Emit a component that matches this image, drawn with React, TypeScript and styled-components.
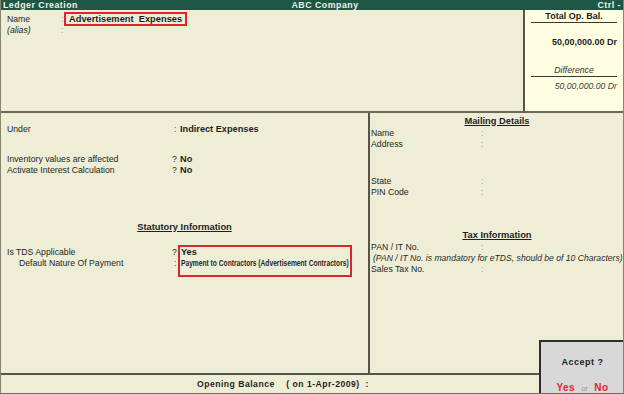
import React from "react";
import styled, { createGlobalStyle } from "styled-components";

const GlobalStyle = createGlobalStyle`
  body {
    margin: 0;
    font-family: "Liberation Sans", Arial, sans-serif;
    background: #eeeed7;
  }
`;

const Screen = styled.div`
  position: relative;
  width: 624px;
  height: 394px;
  box-sizing: border-box;
  display: flex;
  flex-direction: column;
  background: #eeeed7;
  border-left: 1px solid #86866f;
  border-right: 1px solid #86866f;
  border-bottom: 1px solid #6e6e5c;
  overflow: hidden;
  color: #1e1e1e;
  font-size: 8.7px;
`;

const TitleBar = styled.div`
  display: grid;
  grid-template-columns: 1fr auto 1fr;
  height: 10px;
  line-height: 10px;
  padding: 0 2px;
  background: #1f5746;
  color: #eef2e2;
  font-weight: bold;
  font-size: 8.8px;
  letter-spacing: 0.5px;
`;

const TitleCell = styled.span<{ $align: "left" | "center" | "right" }>`
  text-align: ${(p) => p.$align};
  margin-left: ${(p) => (p.$align === "center" ? "26px" : "0")};
`;

const TopArea = styled.div`
  display: flex;
  height: 101px;
  border-bottom: 2px solid #6a6a58;
`;

const NameBlock = styled.div`
  flex: 1;
  padding: 2px 0 0 6px;
`;

const NameRow = styled.div`
  display: grid;
  grid-template-columns: 54px 3px auto;
  align-items: center;
  justify-content: start;
  height: 14px;
`;

const AliasRow = styled.div`
  display: grid;
  grid-template-columns: 54px 3px;
  line-height: 10px;
  margin-top: -1px;
  font-style: italic;
`;

const Colon = styled.span<{ $faint?: boolean; $indent?: number }>`
  color: ${(p) => (p.$faint ? "#9a9a88" : "#555")};
  font-style: normal;
  padding-left: ${(p) => p.$indent ?? 0}px;
`;

const HighlightBox = styled.div<{ $pad?: string }>`
  border: 2px solid #e0232c;
  padding: ${(p) => p.$pad || "0 3px"};
`;

const NameValue = styled.span`
  font-weight: bold;
  font-size: 9.3px;
  line-height: 10px;
  white-space: pre;
  display: block;
`;

const TotalPanel = styled.div`
  width: 98px;
  background: #fefee2;
  border-left: 2px solid #55554a;
  display: flex;
  flex-direction: column;
  align-items: center;
  padding-top: 1px;
`;

const PanelHeading = styled.div<{ $italic?: boolean; $gap: number }>`
  width: 86px;
  margin-top: ${(p) => p.$gap}px;
  line-height: 11px;
  text-align: center;
  border-bottom: 1px solid #3a3a30;
  font-weight: ${(p) => (p.$italic ? "normal" : "bold")};
  font-style: ${(p) => (p.$italic ? "italic" : "normal")};
  font-size: ${(p) => (p.$italic ? "8.7px" : "9px")};
  color: ${(p) => (p.$italic ? "#333" : "#1e1e1e")};
`;

const PanelAmount = styled.div<{ $italic?: boolean; $gap: number }>`
  align-self: flex-end;
  padding-right: 6px;
  margin-top: ${(p) => p.$gap}px;
  line-height: 11px;
  font-weight: ${(p) => (p.$italic ? "normal" : "bold")};
  font-style: ${(p) => (p.$italic ? "italic" : "normal")};
  font-size: ${(p) => (p.$italic ? "8.7px" : "9px")};
  color: ${(p) => (p.$italic ? "#444" : "#1e1e1e")};
`;

const Middle = styled.div`
  display: flex;
  height: 260px;
  border-bottom: 2px solid #55554a;
`;

const LeftCol = styled.div`
  width: 369px;
  border-right: 2px solid #55554a;
  padding: 10.5px 0 0 6px;
  box-sizing: border-box;
`;

const RightCol = styled.div`
  flex: 1;
  padding: 2.5px 0 0 1px;
`;

const Row = styled.div<{ $gap?: number; $labelWidth?: number }>`
  display: grid;
  grid-template-columns: ${(p) => p.$labelWidth ?? 165}px 8px auto;
  line-height: 11px;
  margin-top: ${(p) => p.$gap ?? 0}px;
  white-space: nowrap;
`;

const BoxLine = styled.div`
  line-height: 11px;
  white-space: nowrap;
`;

const Value = styled.span`
  font-weight: bold;
  font-size: 9.2px;
`;

const SectionTitle = styled.div<{ $gap?: number; $shift?: number }>`
  text-align: center;
  margin-top: ${(p) => p.$gap ?? 0}px;
  line-height: 11px;
  font-weight: bold;
  font-size: 9.3px;
  text-decoration: underline;
  padding-right: ${(p) => p.$shift ?? 0}px;
`;

const TdsBlock = styled.div`
  display: flex;
  align-items: flex-start;
  margin-top: 12.5px;
`;

const TdsLabels = styled.div`
  display: grid;
  grid-template-columns: 165px 6px;
  line-height: 11px;
  padding-top: 2px;
`;

const Indented = styled.span`
  padding-left: 12px;
`;

const PaymentText = styled.span`
  display: inline-block;
  font-weight: bold;
  font-size: 9px;
  transform: scaleX(0.74);
  transform-origin: left center;
  white-space: nowrap;
  width: 167px;
`;

const Note = styled.div`
  line-height: 11px;
  font-style: italic;
  font-size: 8.6px;
  padding-left: 2px;
  white-space: nowrap;
  color: #2a2a2a;
`;

const Footer = styled.div`
  height: 18px;
  line-height: 18px;
  padding-left: 196px;
  font-weight: bold;
  font-size: 8.6px;
  letter-spacing: 0.5px;
  white-space: pre;
`;

const AcceptBox = styled.div`
  position: absolute;
  right: -1px;
  bottom: -1px;
  width: 85px;
  height: 54px;
  box-sizing: border-box;
  background: #d8d8d8;
  border: 2px solid #2f2f2f;
  border-right: none;
  border-bottom: none;
  display: flex;
  flex-direction: column;
  align-items: center;
  padding-top: 14.5px;
`;

const AcceptTitle = styled.div`
  font-weight: bold;
  font-size: 9px;
  letter-spacing: 0.5px;
  line-height: 11px;
`;

const AcceptChoices = styled.div`
  margin-top: 14px;
  line-height: 11px;
`;

const Choice = styled.span<{ $muted?: boolean }>`
  color: ${(p) => (p.$muted ? "#9a9a9a" : "#e3222c")};
  font-weight: ${(p) => (p.$muted ? "normal" : "bold")};
  font-size: ${(p) => (p.$muted ? "8px" : "10px")};
  letter-spacing: ${(p) => (p.$muted ? "0" : "0.5px")};
  margin: 0 3px;
`;

const App = () => {
  return (
    <>
      <GlobalStyle />
      <Screen>
        <TitleBar>
          <TitleCell $align="left">Ledger Creation</TitleCell>
          <TitleCell $align="center">ABC Company</TitleCell>
          <TitleCell $align="right">Ctrl -</TitleCell>
        </TitleBar>

        <TopArea>
          <NameBlock>
            <NameRow>
              <span>Name</span>
              <Colon $faint>:</Colon>
              <HighlightBox>
                <NameValue>{"Advertisement  Expenses"}</NameValue>
              </HighlightBox>
            </NameRow>
            <AliasRow>
              <span>(alias)</span>
              <Colon $faint>:</Colon>
            </AliasRow>
          </NameBlock>
          <TotalPanel>
            <PanelHeading $gap={0}>Total Op. Bal.</PanelHeading>
            <PanelAmount $gap={13.5}>50,00,000.00 Dr</PanelAmount>
            <PanelHeading $italic $gap={17}>
              Difference
            </PanelHeading>
            <PanelAmount $italic $gap={4}>
              50,00,000.00 Dr
            </PanelAmount>
          </TotalPanel>
        </TopArea>

        <Middle>
          <LeftCol>
            <Row>
              <span>Under</span>
              <Colon $indent={2}>:</Colon>
              <Value>Indirect Expenses</Value>
            </Row>
            <Row $gap={19}>
              <span>Inventory values are affected</span>
              <span>?</span>
              <Value>No</Value>
            </Row>
            <Row>
              <span>Activate Interest Calculation</span>
              <span>?</span>
              <Value>No</Value>
            </Row>
            <SectionTitle $gap={46} $shift={6}>
              Statutory Information
            </SectionTitle>
            <TdsBlock>
              <TdsLabels>
                <span>Is TDS Applicable</span>
                <span>?</span>
                <Indented>Default Nature Of Payment</Indented>
                <Colon $indent={2}>:</Colon>
              </TdsLabels>
              <HighlightBox $pad="0 2px 6px 1px">
                <BoxLine>
                  <Value>Yes</Value>
                </BoxLine>
                <BoxLine>
                  <PaymentText>
                    Payment to Contractors (Advertisement Contractors)
                  </PaymentText>
                </BoxLine>
              </HighlightBox>
            </TdsBlock>
          </LeftCol>

          <RightCol>
            <SectionTitle>Mailing Details</SectionTitle>
            <Row $labelWidth={110} $gap={1}>
              <span>Name</span>
              <Colon $faint>:</Colon>
            </Row>
            <Row $labelWidth={110}>
              <span>Address</span>
              <Colon $faint>:</Colon>
            </Row>
            <Row $labelWidth={110} $gap={26}>
              <span>State</span>
              <Colon $faint>:</Colon>
            </Row>
            <Row $labelWidth={110}>
              <span>PIN Code</span>
              <Colon $faint>:</Colon>
            </Row>
            <SectionTitle $gap={32}>Tax Information</SectionTitle>
            <Row $labelWidth={110} $gap={1}>
              <span>PAN / IT No.</span>
              <Colon $faint>:</Colon>
            </Row>
            <Note>(PAN / IT No. is mandatory for eTDS, should be of 10 Characters)</Note>
            <Row $labelWidth={110}>
              <span>Sales Tax No.</span>
              <Colon $faint>:</Colon>
            </Row>
          </RightCol>
        </Middle>

        <Footer>{"Opening Balance    ( on 1-Apr-2009)  :"}</Footer>

        <AcceptBox>
          <AcceptTitle>Accept ?</AcceptTitle>
          <AcceptChoices>
            <Choice>Yes</Choice>
            <Choice $muted>or</Choice>
            <Choice>No</Choice>
          </AcceptChoices>
        </AcceptBox>
      </Screen>
    </>
  );
};

export default App;
